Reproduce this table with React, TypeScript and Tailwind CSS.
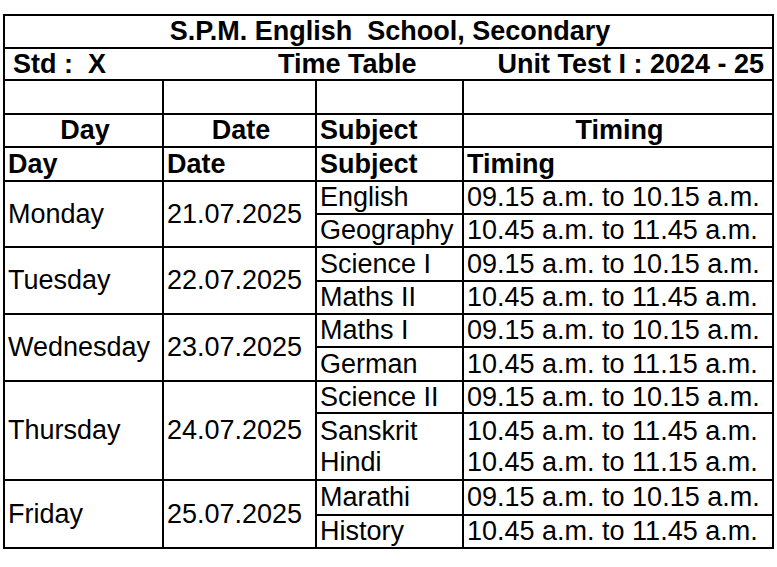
import React from 'react';

type CellProps = {
  children?: React.ReactNode;
  className?: string;
};

function Cell({ children, className = '' }: CellProps) {
  return (
    <div
      className={`flex items-center border-r-2 border-b-2 border-black pl-[3px] whitespace-pre overflow-hidden ${className}`}
    >
      {children}
    </div>
  );
}

const days = [
  {
    day: 'Monday',
    date: '21.07.2025',
    rows: [
      { subject: ['English'], timing: ['09.15 a.m. to 10.15 a.m.'] },
      { subject: ['Geography'], timing: ['10.45 a.m. to 11.45 a.m.'] },
    ],
  },
  {
    day: 'Tuesday',
    date: '22.07.2025',
    rows: [
      { subject: ['Science I'], timing: ['09.15 a.m. to 10.15 a.m.'] },
      { subject: ['Maths II'], timing: ['10.45 a.m. to 11.45 a.m.'] },
    ],
  },
  {
    day: 'Wednesday',
    date: '23.07.2025',
    rows: [
      { subject: ['Maths I'], timing: ['09.15 a.m. to 10.15 a.m.'] },
      { subject: ['German'], timing: ['10.45 a.m. to 11.15 a.m.'] },
    ],
  },
  {
    day: 'Thursday',
    date: '24.07.2025',
    rows: [
      { subject: ['Science II'], timing: ['09.15 a.m. to 10.15 a.m.'] },
      {
        subject: ['Sanskrit', 'Hindi'],
        timing: ['10.45 a.m. to 11.45 a.m.', '10.45 a.m. to 11.15 a.m.'],
      },
    ],
  },
  {
    day: 'Friday',
    date: '25.07.2025',
    rows: [
      { subject: ['Marathi'], timing: ['09.15 a.m. to 10.15 a.m.'] },
      { subject: ['History'], timing: ['10.45 a.m. to 11.45 a.m.'] },
    ],
  },
];

function Lines({ lines }: { lines: string[] }) {
  if (lines.length === 1) return <span>{lines[0]}</span>;
  return (
    <div className="flex flex-col">
      {lines.map((l) => (
        <span key={l}>{l}</span>
      ))}
    </div>
  );
}

export default function App() {
  return (
    <div className="min-h-screen bg-white pt-[14px] pl-[3px] text-black font-['Liberation_Sans',Arial,sans-serif] text-[27px] leading-[31px]">
      <div className="grid w-[771px] grid-cols-[159px_153px_147px_310px] grid-rows-[33px_32px_34px_33px_34px_33px_33px_34px_33px_33px_34px_32px_67px_35px_33px] border-t-2 border-l-2 border-black">
        {/* title */}
        <Cell className="col-span-4 justify-center pl-0 font-bold">
          S.P.M. English  School, Secondary
        </Cell>

        {/* std / time table / unit test */}
        <Cell className="col-span-4 pl-[8px] pr-[8px] font-bold">
          <span className="w-[265px] shrink-0">Std :  X</span>
          <span>Time Table</span>
          <span className="ml-auto">Unit Test I : 2024 - 25</span>
        </Cell>

        {/* empty row */}
        <Cell />
        <Cell />
        <Cell />
        <Cell />

        {/* header 1 */}
        <Cell className="justify-center pl-0 font-bold">Day</Cell>
        <Cell className="justify-center pl-0 font-bold">Date</Cell>
        <Cell className="font-bold">Subject</Cell>
        <Cell className="justify-center pl-0 font-bold">Timing</Cell>

        {/* header 2 */}
        <Cell className="font-bold">Day</Cell>
        <Cell className="font-bold">Date</Cell>
        <Cell className="font-bold">Subject</Cell>
        <Cell className="font-bold">Timing</Cell>

        {days.map((d) => (
          <React.Fragment key={d.day}>
            <Cell className="row-span-2 col-start-1">{d.day}</Cell>
            <Cell className="row-span-2 col-start-2">{d.date}</Cell>
            {d.rows.map((r, i) => (
              <React.Fragment key={i}>
                <Cell className="col-start-3">
                  <Lines lines={r.subject} />
                </Cell>
                <Cell className="col-start-4">
                  <Lines lines={r.timing} />
                </Cell>
              </React.Fragment>
            ))}
          </React.Fragment>
        ))}
      </div>
    </div>
  );
}
